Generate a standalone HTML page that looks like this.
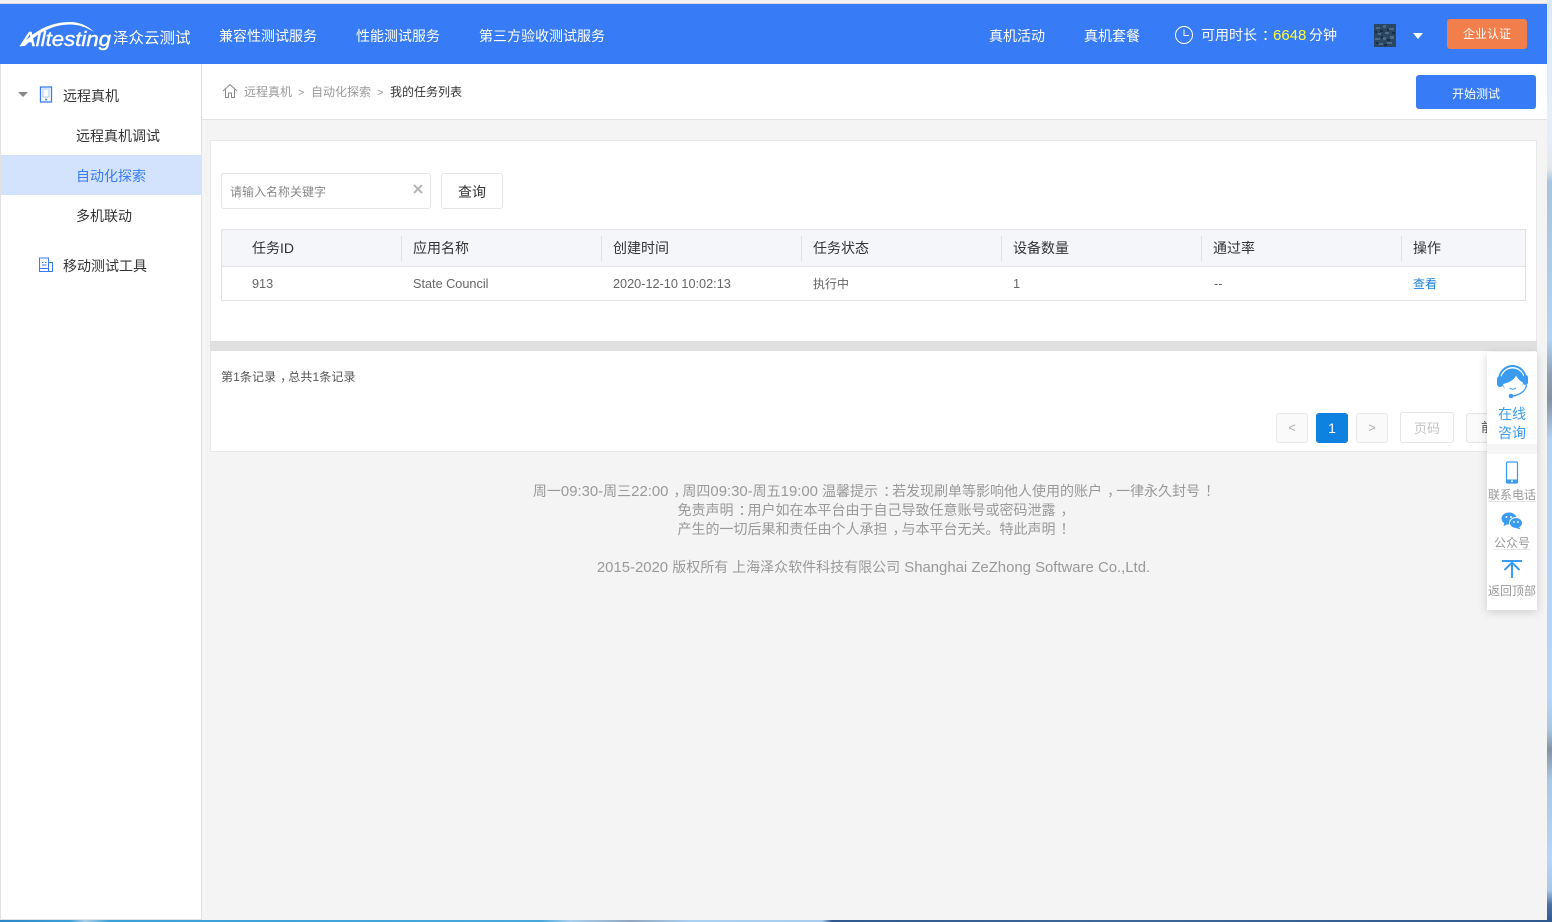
<!DOCTYPE html>
<html lang="zh-CN">
<head>
<meta charset="utf-8">
<title>Alltesting</title>
<style>
html,body{margin:0;padding:0}
body{position:relative;width:1552px;height:922px;overflow:hidden;background:#f4f4f4;font-family:"Liberation Sans","Noto Sans CJK SC",sans-serif;color:#333}
div,span,svg{position:absolute;box-sizing:border-box}
i{font-style:normal}
i.p{position:relative;left:5px}
i.l{font-size:14.9px}
.t{line-height:20px;white-space:nowrap;font-size:14px}
.s{font-size:12px}
.w{color:#fff}
.g{color:#999}
.sep{width:1px;height:26px;top:236px;background:#dfe2e8}
.h{top:238px;color:#333}
.r{top:274px;color:#666;font-size:12.700px}
.pg{top:413px;width:32px;height:30px;background:#fafafa;border:1px solid #e8e8e8;border-radius:3px;text-align:center;line-height:28px;font-size:13px;color:#aaa}
.c{text-align:center}
</style>
</head>
<body>
<div style="left:0;top:0;width:1552px;height:3px;background:#f2f2f2"></div>
<div style="left:0;top:3px;width:1547px;height:1px;background:#dcdcdc"></div>
<div style="left:0;top:4px;width:1547px;height:60px;background:#377cf6"></div>

<svg style="left:18px;top:18px" width="100" height="34" viewBox="0 0 100 34">
<path d="M3 28C15 13 33 4 52 4C62 4 70 8 76 14C68 9 60 6.500 52 6.500C36 6.500 20 14 7 28Z" fill="#fff"/>
<text x="3" y="28" font-family="Liberation Sans" font-style="italic" font-size="20" fill="#fff" stroke="#fff" stroke-width=".4" textLength="90" lengthAdjust="spacingAndGlyphs">Alltesting</text>
</svg>
<span class="t w" style="left:113px;top:29px;font-size:15.500px">泽众云测试</span>
<span class="t w" style="left:219px;top:26px">兼容性测试服务</span>
<span class="t w" style="left:356px;top:26px">性能测试服务</span>
<span class="t w" style="left:479px;top:26px">第三方验收测试服务</span>
<span class="t w" style="left:989px;top:26px">真机活动</span>
<span class="t w" style="left:1084px;top:26px">真机套餐</span>
<svg style="left:1174px;top:25px" width="20" height="20" viewBox="0 0 20 20" fill="none" stroke="#fff" stroke-width="1"><circle cx="10" cy="10" r="8.500"/><path d="M10 4.500V10.500H15"/></svg>
<span class="t w" style="left:1201px;top:25px">可用时长<i class="p">：</i></span>
<span class="t" style="left:1273px;top:26px;color:#ffff3c;font-size:15px">6648</span>
<span class="t w" style="left:1309px;top:25px">分钟</span>
<svg style="left:1374px;top:24px" width="22" height="23" viewBox="0 0 22 23">
<rect width="22" height="23" fill="#2a4660"/>
<path d="M2 3h4v2H2zM9 1h3v3H9zM15 4h5v2h-5zM4 9h3v2H4zM11 8h4v2h-4zM1 14h5v2H1zM9 13h3v3H9zM16 12h4v3h-4zM5 19h4v2H5zM13 18h5v2h-5z" fill="#4c6a80"/>
<path d="M6 6h3v2H6zM13 5h2v2h-2zM1 7h2v2H1zM18 8h3v2h-3zM7 12h2v2H7zM13 15h3v2h-3zM2 18h2v2H2zM10 20h3v2h-3z" fill="#1a2c40"/>
</svg>
<div style="left:1413px;top:33px;width:0;height:0;border-left:5px solid transparent;border-right:5px solid transparent;border-top:6px solid #fff"></div>
<div style="left:1447px;top:19px;width:80px;height:30px;background:#f27e4b;border-radius:3px"></div>
<span class="t w s c" style="left:1447px;top:24px;width:80px">企业认证</span>

<div style="left:0;top:64px;width:202px;height:856px;background:#fff;border-left:1px solid #e2e2e2;border-right:1px solid #e2e2e2;border-bottom:1px solid #e2e2e2"></div>
<div style="left:18px;top:92px;width:0;height:0;border-left:5px solid transparent;border-right:5px solid transparent;border-top:5px solid #888"></div>
<svg style="left:39px;top:86px" width="14" height="17" viewBox="0 0 14 17" fill="none"><rect x="1.500" y="1" width="11" height="15" stroke="#377cf6" stroke-width="1.300"/><rect x="4" y="3" width="6" height="8" stroke="#a9c5fa"/><circle cx="7" cy="13.500" r="1" fill="#377cf6"/></svg>
<span class="t" style="left:63px;top:86px">远程真机</span>
<span class="t" style="left:76px;top:126px">远程真机调试</span>
<div style="left:1px;top:155px;width:200px;height:40px;background:#d3e2fd"></div>
<span class="t" style="left:76px;top:166px;color:#377cf6">自动化探索</span>
<span class="t" style="left:76px;top:206px">多机联动</span>
<svg style="left:38px;top:257px" width="16" height="16" viewBox="0 0 16 16" fill="none" stroke="#377cf6"><rect x="1.500" y="1" width="9" height="13.500"/><path d="M10.500 5.500H14.500V14.500H10.500M1.500 11.500H10.500M4 5.500h1.500M7 5.500h1.500M4 8h4.500"/></svg>
<span class="t" style="left:63px;top:256px">移动测试工具</span>

<div style="left:202px;top:64px;width:1345px;height:56px;background:#fff;border-bottom:1px solid #e2e2e2"></div>
<svg style="left:222px;top:83px" width="16" height="16" viewBox="0 0 16 16" fill="none" stroke="#888" stroke-width="1"><path d="M1 8L8 1.500L15 8M3.500 6.500V14.500H6.500V10H9.500V14.500H12.500V6.500"/></svg>
<span class="t s g" style="left:244px;top:82px">远程真机</span>
<span class="t s g" style="left:298px;top:83px;font-size:11px">&gt;</span>
<span class="t s g" style="left:311px;top:82px">自动化探索</span>
<span class="t s g" style="left:377px;top:83px;font-size:11px">&gt;</span>
<span class="t s" style="left:390px;top:82px">我的任务列表</span>
<div style="left:1416px;top:75px;width:120px;height:34px;background:#377cf6;border-radius:3px"></div>
<span class="t w s c" style="left:1416px;top:84px;width:120px">开始测试</span>

<div style="left:210px;top:140px;width:1327px;height:312px;background:#fff;border:1px solid #e8e8e8"></div>
<div style="left:210px;top:341px;width:1327px;height:10px;background:#e0e0e0"></div>
<div style="left:221px;top:173px;width:210px;height:36px;border:1px solid #e4e4e4;border-radius:3px"></div>
<span class="t s" style="left:230px;top:182px;color:#888">请输入名称关键字</span>
<svg style="left:412px;top:183px" width="12" height="12" viewBox="0 0 12 12" stroke="#b5b5b5" stroke-width="2"><path d="M2 2L10 10M10 2L2 10"/></svg>
<div style="left:441px;top:173px;width:62px;height:36px;border:1px solid #e4e4e4;border-radius:3px"></div>
<span class="t c" style="left:441px;top:182px;width:62px">查询</span>

<div style="left:221px;top:229px;width:1305px;height:72px;border:1px solid #e0e2e6;background:#fff"></div>
<div style="left:222px;top:230px;width:1303px;height:37px;background:#f4f6fa;border-bottom:1px solid #e0e2e6"></div>
<div class="sep" style="left:401px"></div>
<div class="sep" style="left:601px"></div>
<div class="sep" style="left:801px"></div>
<div class="sep" style="left:1001px"></div>
<div class="sep" style="left:1201px"></div>
<div class="sep" style="left:1401px"></div>
<span class="t h" style="left:252px">任务ID</span>
<span class="t h" style="left:413px">应用名称</span>
<span class="t h" style="left:613px">创建时间</span>
<span class="t h" style="left:813px">任务状态</span>
<span class="t h" style="left:1013px">设备数量</span>
<span class="t h" style="left:1213px">通过率</span>
<span class="t h" style="left:1413px">操作</span>
<span class="t r" style="left:252px">913</span>
<span class="t r" style="left:413px">State Council</span>
<span class="t r" style="left:613px">2020-12-10 10:02:13</span>
<span class="t r" style="left:813px;font-size:12px">执行中</span>
<span class="t r" style="left:1013px">1</span>
<span class="t r" style="left:1214px">--</span>
<span class="t r" style="left:1413px;font-size:12px;color:#1b7fdc">查看</span>

<span class="t s" style="left:221px;top:367px;color:#555;letter-spacing:.1px">第1条记录<i class="p" style="left:4px">，</i>总共1条记录</span>
<div class="pg" style="left:1276px">&lt;</div>
<div class="pg" style="left:1316px;background:#0f81e0;border-color:#0f81e0;color:#fff;font-size:14px">1</div>
<div class="pg" style="left:1356px">&gt;</div>
<div style="left:1400px;top:412px;width:54px;height:31px;border:1px solid #e4e4e4;border-radius:3px;text-align:center;line-height:31px;font-size:13px;color:#c4c4c4">页码</div>
<div style="left:1466px;top:413px;width:50px;height:30px;border:1px solid #e4e4e4;border-radius:3px;line-height:28px;font-size:13px;color:#555;padding-left:14px;background:#fafafa;white-space:nowrap;overflow:hidden">前往</div>

<div class="t g c" style="left:202px;top:481px;width:1343px">周一<i class="l">09:30-</i>周三<i class="l">22:00</i><i class="p">，</i>周四<i class="l">09:30-</i>周五<i class="l">19:00 </i>温馨提示<i class="p">：</i>若发现刷单等影响他人使用的账户<i class="p">，</i>一律永久封号<i class="p">！</i></div>
<div class="t g c" style="left:202px;top:500px;width:1343px">免责声明<i class="p">：</i>用户如在本平台由于自己导致任意账号或密码泄露<i class="p">，</i></div>
<div class="t g c" style="left:202px;top:519px;width:1343px">产生的一切后果和责任由个人承担<i class="p">，</i>与本平台无关。特此声明<i class="p">！</i></div>
<div class="t g c" style="left:202px;top:557px;width:1343px"><i class="l">2015-2020 </i>版权所有 上海泽众软件科技有限公司<i class="l"> Shanghai ZeZhong Software Co.,Ltd.</i></div>

<div style="left:1487px;top:352px;width:50px;height:258px;background:#fff;box-shadow:0 2px 9px rgba(0,0,0,.16)"></div>
<div style="left:1487px;top:444px;width:50px;height:10px;background:#f5f5f5"></div>
<svg style="left:1495px;top:363px" width="35" height="36" viewBox="0 0 35 36">
<path d="M4 17A13.500 14 0 0 1 31 17" fill="none" stroke="#3a9bf0" stroke-width="2"/>
<rect x="2" y="13" width="6" height="11" rx="3" fill="#3a9bf0"/>
<rect x="28" y="12" width="5" height="10" rx="2.500" fill="#3a9bf0"/>
<circle cx="17.500" cy="17" r="11.500" fill="#3a9bf0"/>
<path d="M8 21C13 20 19.500 17 21 12.500C22.500 15.500 25.500 18.500 28 19.500C27.500 25 23 30 18 30C13 30 9 26 8 21Z" fill="#fff"/>
<path d="M14.500 25C16.500 26.500 19 26.500 21 25" fill="none" stroke="#3a9bf0" stroke-width="1"/>
<path d="M31.500 22C31 27.500 25 32 18 33" fill="none" stroke="#3a9bf0" stroke-width="1.300"/>
<circle cx="16" cy="33" r="2.300" fill="#3a9bf0"/>
</svg>
<span class="t c" style="left:1487px;top:404px;width:50px;color:#3a9bf0">在线</span>
<span class="t c" style="left:1487px;top:423px;width:50px;color:#3a9bf0">咨询</span>
<svg style="left:1505px;top:461px" width="14" height="23" viewBox="0 0 14 23" fill="none"><rect x="1.500" y="1" width="11" height="21" rx="1" stroke="#3a9bf0" stroke-width="1.200"/><rect x="1.500" y="18.500" width="11" height="3.500" fill="#3a9bf0"/><circle cx="7" cy="20.200" r="1" fill="#fff"/></svg>
<span class="t s c" style="left:1487px;top:485px;width:50px;color:#999">联系电话</span>
<div style="left:1488px;top:501px;width:48px;height:1px;background:#e6e6e6"></div>
<svg style="left:1501px;top:512px" width="22" height="18" viewBox="0 0 22 18">
<ellipse cx="8" cy="6.500" rx="7.500" ry="6" fill="#3a9bf0"/><path d="M3.500 10L2.500 14L7 12Z" fill="#3a9bf0"/>
<ellipse cx="15" cy="11" rx="6.500" ry="5.500" fill="#3a9bf0" stroke="#fff" stroke-width="1"/><path d="M18 15L19.500 17.500L15 16Z" fill="#3a9bf0"/>
<circle cx="5.500" cy="5" r="1" fill="#fff"/><circle cx="10" cy="5" r="1" fill="#fff"/><circle cx="13" cy="10" r=".9" fill="#fff"/><circle cx="17" cy="10" r=".9" fill="#fff"/>
</svg>
<span class="t s c" style="left:1487px;top:533px;width:50px;color:#999">公众号</span>
<div style="left:1494px;top:549px;width:36px;height:1px;background:#e6e6e6"></div>
<svg style="left:1502px;top:559px" width="20" height="20" viewBox="0 0 20 20" fill="none" stroke="#3a9bf0" stroke-width="2"><path d="M0 2H20M10 19V3M2.500 11L10 3.500L17.500 11"/></svg>
<span class="t s c" style="left:1487px;top:581px;width:50px;color:#999">返回顶部</span>

<div style="left:1547px;top:0;width:5px;height:922px;background:linear-gradient(180deg,#dbe9f8 0,#e6eef8 140px,#e4e8ee 168px,#a7c4e0 182px,#a9c6e2 210px,#b5d3f5 340px,#8f9fb2 375px,#8592a3 400px,#b5d3f5 440px,#b5d6f9 700px,#a9c6e2 730px,#8592a3 750px,#a9c8e8 780px,#b5d6f9 860px,#a8c8ea 890px,#4a6f9f 905px,#2f5a90 922px)"></div>
<div style="left:0;top:920px;width:1552px;height:2px;background:linear-gradient(90deg,#2c86c8 0,#3aa0d8 70px,#a9cfe8 85px,#3aa0d8 110px,#47a8dc 540px,#a9d0f0 570px,#8fa6bf 630px,#aad0f2 690px,#a8cdee 822px,#2f5a90 832px,#3d6798 1100px,#2f5a90 1552px)"></div>
</body>
</html>
